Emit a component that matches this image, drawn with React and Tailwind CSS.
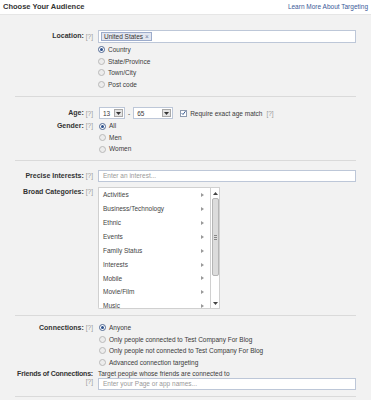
import React from 'react';

const categories = ['Activities', 'Business/Technology', 'Ethnic', 'Events', 'Family Status', 'Interests', 'Mobile', 'Movie/Film', 'Music'];

function Radio({ checked, label, h = 'h-[11.6px]' }) {
  return (
    <div className={`flex items-center gap-[3px] ${h}`}>
      <span className={`flex items-center justify-center w-[7px] h-[7px] rounded-full border ${checked ? 'border-[#4f6792] bg-white' : 'border-[#b9b9b9] bg-[#ececec]'}`}>
        {checked ? <span className="w-[3px] h-[3px] rounded-full bg-[#2b4f8a]" /> : null}
      </span>
      <span>{label}</span>
    </div>
  );
}

function Label({ text, className = '' }) {
  return (
    <div className={`w-[94px] flex justify-end items-center gap-[2px] pr-[1px] ${className}`}>
      <span className="font-bold text-[7px] text-[#333]">{text}</span>
      <span className="text-[#999]">[?]</span>
    </div>
  );
}

function Sep({ className = '' }) {
  return <div className={`mx-[15px] border-t border-[#dadada] ${className}`} />;
}

function SelectBox({ value, w }) {
  return (
    <div className={`flex items-center justify-between h-[12px] bg-white border border-[#bdc7d8] pl-[3px] pr-[1px] ${w}`}>
      <span>{value}</span>
      <span className="flex items-center justify-center w-[9px] h-[8px] bg-[#e4e4e4] border border-[#a9a9a9]">
        <svg width="5" height="3" viewBox="0 0 5 3"><path d="M0 0h5L2.5 3z" fill="#333" /></svg>
      </span>
    </div>
  );
}

export default function App() {
  return (
    <div className="w-[371px] h-[400px] overflow-hidden bg-white text-[6.5px] text-[#3a3a3a] font-['Liberation_Sans',Arial,sans-serif]">
      <div className="flex items-center justify-between h-[14px] px-[3px]">
        <span className="font-bold text-[7.5px] text-[#333]">Choose Your Audience</span>
        <span className="text-[#3b5998]">Learn More About Targeting</span>
      </div>

      <div className="bg-[#f2f2f2] border-t border-[#e6e6e6] pt-[15px] h-[386px]">
        {/* location */}
        <div className="flex">
          <Label text="Location:" className="h-[13px]" />
          <div className="ml-[4px] w-[258px]">
            <div className="h-[13px] bg-white border border-[#bdc7d8] flex items-center pl-[2px]">
              <span className="flex items-center h-[9px] px-[2px] bg-[#e2e6f0] border border-[#9daccc] text-[#333]">
                United States <span className="ml-[2px] text-[#6f7f9f]">×</span>
              </span>
            </div>
            <div className="mt-[1px]">
              <Radio checked label="Country" />
              <Radio label="State/Province" />
              <Radio label="Town/City" />
              <Radio label="Post code" />
            </div>
          </div>
        </div>

        <Sep className="mt-[6px]" />

        {/* age and gender */}
        <div className="flex mt-[10px]">
          <Label text="Age:" className="h-[12px]" />
          <div className="ml-[5px] flex items-center gap-[3px]">
            <SelectBox value="13" w="w-[26px]" />
            <span>-</span>
            <SelectBox value="65" w="w-[40px]" />
            <div className="flex items-center gap-[3px] ml-[4px]">
              <span className="flex items-center justify-center w-[7px] h-[7px] bg-white border border-[#8d9aae]">
                <svg width="6" height="6" viewBox="0 0 6 6"><path d="M0.8 3.2l1.6 1.6L5.4 0.8" fill="none" stroke="#2b4f8a" strokeWidth="1.1" /></svg>
              </span>
              <span>Require exact age match</span>
              <span className="ml-[1px] text-[#999]">[?]</span>
            </div>
          </div>
        </div>
        <div className="flex mt-[1px]">
          <Label text="Gender:" className="h-[11.6px]" />
          <div className="ml-[5px]">
            <Radio checked label="All" />
            <Radio label="Men" />
            <Radio label="Women" />
          </div>
        </div>

        <Sep className="mt-[5px]" />

        {/* interests */}
        <div className="flex mt-[9px]">
          <Label text="Precise Interests:" className="h-[12px]" />
          <div className="ml-[4px] w-[258px] h-[12px] bg-white border border-[#bdc7d8] flex items-center pl-[4px] text-[#999]">
            Enter an interest...
          </div>
        </div>
        <div className="flex mt-[5px]">
          <Label text="Broad Categories:" className="h-[8px] items-start" />
          <div className="ml-[4px] flex h-[122px]">
            <div className="w-[112px] h-full overflow-hidden bg-white border-l border-b border-t border-[#d0d0d0] rounded-bl-[2px]">
              {categories.map((c) => (
                <div key={c} className="flex items-center justify-between h-[13.9px] pl-[4px] pr-[6px]">
                  <span className="text-[#444]">{c}</span>
                  <svg width="3" height="4" viewBox="0 0 3 4"><path d="M0 0l3 2-3 2z" fill="#999" /></svg>
                </div>
              ))}
            </div>
            <div className="w-[10px] h-full bg-white border border-[#d0d0d0] flex flex-col items-center">
              <div className="h-[10px] flex items-center justify-center">
                <svg width="5" height="3" viewBox="0 0 5 3"><path d="M0 3h5L2.5 0z" fill="#444" /></svg>
              </div>
              <div className="w-[7px] h-[78px] rounded-[2px] bg-[#dcdcdc] border border-[#b5b5b5] flex flex-col items-center justify-center gap-[1px]">
                <span className="w-[3px] border-t border-[#888]" />
                <span className="w-[3px] border-t border-[#888]" />
                <span className="w-[3px] border-t border-[#888]" />
              </div>
              <div className="flex-1" />
              <div className="h-[10px] flex items-center justify-center">
                <svg width="5" height="3" viewBox="0 0 5 3"><path d="M0 0h5L2.5 3z" fill="#444" /></svg>
              </div>
            </div>
          </div>
        </div>

        <Sep className="mt-[6px]" />

        {/* connections */}
        <div className="flex mt-[6px]">
          <Label text="Connections:" className="h-[11.5px]" />
          <div className="ml-[5px]">
            <Radio checked label="Anyone" h="h-[11.5px]" />
            <Radio label="Only people connected to Test Company For Blog" h="h-[11.5px]" />
            <Radio label="Only people not connected to Test Company For Blog" h="h-[11.5px]" />
            <Radio label="Advanced connection targeting" h="h-[11.5px]" />
          </div>
        </div>
        <div className="flex mt-[2px]">
          <div className="w-[94px] pr-[1px] text-right leading-[8px]">
            <div className="font-bold text-[7px] tracking-[-0.2px] text-[#333] whitespace-nowrap">Friends of Connections:</div>
            <div className="text-[#999]">[?]</div>
          </div>
          <div className="ml-[4px] w-[258px]">
            <div className="leading-[8px]">Target people whose friends are connected to</div>
            <div className="h-[12px] bg-white border border-[#bdc7d8] flex items-center pl-[4px] text-[#999]">
              Enter your Page or app names...
            </div>
          </div>
        </div>

        <Sep className="mt-[6px]" />
      </div>
    </div>
  );
}
